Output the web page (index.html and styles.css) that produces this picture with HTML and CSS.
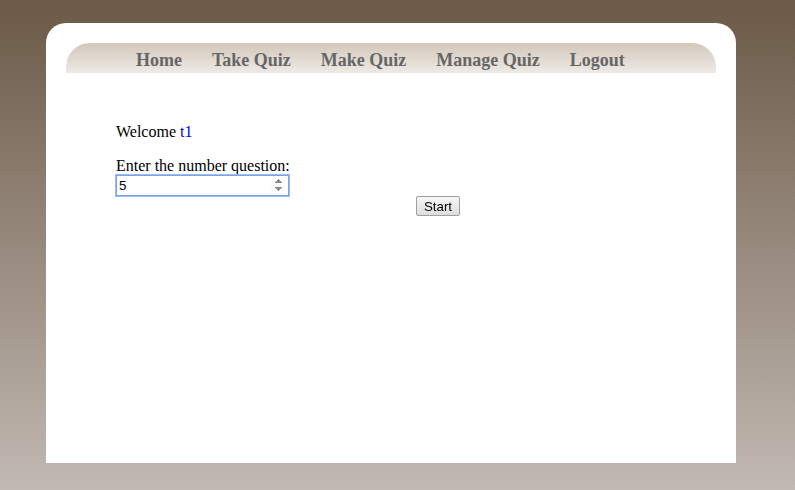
FILE: index.html
```html
<!DOCTYPE html>
<html>
<head>
<meta charset="utf-8">
<link rel="stylesheet" href="styles.css">
</head>
<body>
<div class="card">
  <nav class="nav">
    <a class="nav-link" href="#">Home</a>
    <a class="nav-link" href="#">Take Quiz</a>
    <a class="nav-link" href="#">Make Quiz</a>
    <a class="nav-link" href="#">Manage Quiz</a>
    <a class="nav-link" href="#">Logout</a>
  </nav>
  <div class="content">
    <p class="welcome">Welcome <span class="user">t1</span></p>
    <form class="form">
      <label class="label" for="num">Enter the number question:</label>
      <input class="num" id="num" type="number" value="5" autofocus>
      <div class="actions"><button class="btn" type="button">Start</button></div>
    </form>
  </div>
</div>
</body>
</html>
```
FILE: styles.css
```css
html, body {
  margin: 0;
  height: 100%;
}
body {
  background: linear-gradient(to bottom, #6c5b49 0%, #6f5e4c 5%, #c2b9b3 100%);
  font-family: "Liberation Serif", "Times New Roman", serif;
  font-size: 16px;
  color: #000;
  padding: 23px 59px 0 46px;
  box-sizing: border-box;
  overflow: hidden;
}
.card {
  width: 690px;
  height: 440px;
  background: #fff;
  border-radius: 20px 20px 0 0;
  padding: 20px 20px 0 20px;
  box-sizing: border-box;
}
.nav {
  height: 30px;
  border-radius: 24px 24px 0 0;
  background: linear-gradient(to bottom, #d3c7ba 0%, #eeeae5 100%);
  display: flex;
  gap: 30px;
  padding-left: 70px;
  align-items: center;
}
.nav-link {
  font-weight: bold;
  font-size: 18px;
  color: #666;
  text-decoration: none;
  line-height: 30px;
  padding-top: 4px;
}
.content {
  padding: 50px 0 0 50px;
}
.welcome {
  margin: 0 0 16px 0;
  line-height: 18px;
}
.user {
  color: #0000ee;
}
.form {
  display: flex;
  flex-direction: column;
  align-items: flex-start;
}
.label {
  line-height: 18px;
  display: block;
}
.num {
  width: 173px;
  height: 21px;
  box-sizing: border-box;
  margin: 0;
  font-family: "Liberation Sans", Arial, sans-serif;
  font-size: 13.33px;
  border: 1px solid #7aa3e8;
  outline: 1px solid #9bbcf0;
  outline-offset: 0;
  padding: 1px 2px;
}
.actions {
  width: 644px;
  display: flex;
  justify-content: center;
  margin-top: 0;
}
.btn {
  font-family: "Liberation Sans", Arial, sans-serif;
  font-size: 13.33px;
  width: 44px;
  height: 20px;
  padding: 0;
  border: 1px solid #a0a0a0;
  border-radius: 2px;
  background: linear-gradient(#f6f6f6, #dedede);
  color: #000;
}
```
